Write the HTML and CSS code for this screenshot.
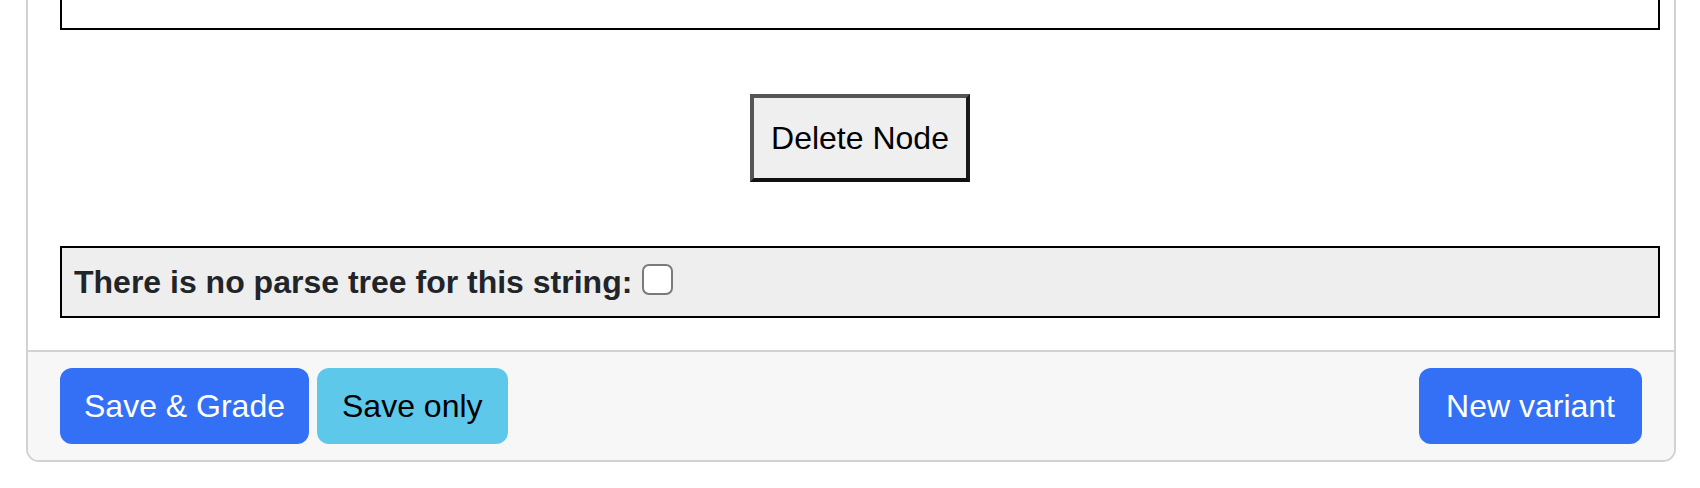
FILE: index.html
```html
<!DOCTYPE html>
<html lang="en">
<head>
<meta charset="utf-8">
<title>Question</title>
<link rel="stylesheet" href="styles.css">
</head>
<body>
<div class="card">
  <div class="card-body">
    <div class="tree-box"></div>
    <div class="delete-row">
      <button class="delete-btn" type="button">Delete Node</button>
    </div>
    <div class="no-tree">
      <label class="no-tree-label">There is no parse tree for this string:<input class="no-tree-check" type="checkbox"></label>
    </div>
  </div>
  <div class="card-footer">
    <button class="btn btn-primary" type="button">Save &amp; Grade</button>
    <button class="btn btn-info" type="button">Save only</button>
    <button class="btn btn-primary btn-right" type="button">New variant</button>
  </div>
</div>
</body>
</html>
```
FILE: styles.css
```css
html, body {
  margin: 0;
  padding: 0;
  background: #ffffff;
}

body {
  font-family: "Liberation Sans", Arial, sans-serif;
  color: #212529;
  overflow: hidden;
}

.card {
  margin: -60px 24px 0 26px;
  border: 2px solid #d2d2d2;
  border-radius: 13px;
  background: #ffffff;
  overflow: hidden;
}

.card-body {
  padding: 32px 14px 32px 32px;
}

.tree-box {
  height: 52px;
  border: 2px solid #000000;
  background: #ffffff;
}

.delete-row {
  display: flex;
  justify-content: center;
  margin: 64px 0;
}

.delete-btn {
  font-family: "Liberation Sans", Arial, sans-serif;
  font-size: 32px;
  line-height: 38px;
  color: #000000;
  background: #efefef;
  padding: 21px 17px;
  border: 4px solid;
  border-color: #555555 #1a1a1a #111111 #555555;
  border-radius: 0;
  margin: 0;
}

.no-tree {
  border: 2px solid #000000;
  background: #eeeeee;
  padding: 10px 12px;
}

.no-tree-label {
  font-size: 32px;
  line-height: 48px;
  font-weight: bold;
  color: #212529;
}

.no-tree-check {
  appearance: none;
  -webkit-appearance: none;
  display: inline-block;
  box-sizing: border-box;
  width: 31px;
  height: 31px;
  margin: 0 0 0 10px;
  border: 2px solid #7a7a7a;
  border-radius: 7px;
  background: #ffffff;
  vertical-align: -2px;
}

.card-footer {
  display: flex;
  gap: 8px;
  padding: 16px 32px;
  background: #f7f7f7;
  border-top: 2px solid #d2d2d2;
}

.btn {
  font-family: "Liberation Sans", Arial, sans-serif;
  font-size: 32px;
  line-height: 48px;
  height: 76px;
  padding: 0 24px;
  border: none;
  border-radius: 12px;
  margin: 0;
}

.btn-primary {
  background: #3470f5;
  color: #ffffff;
}

.btn-info {
  background: #5ec8eb;
  color: #000000;
  padding: 0 25px;
}

.btn-right {
  margin-left: auto;
  padding: 0 27px;
}
```
